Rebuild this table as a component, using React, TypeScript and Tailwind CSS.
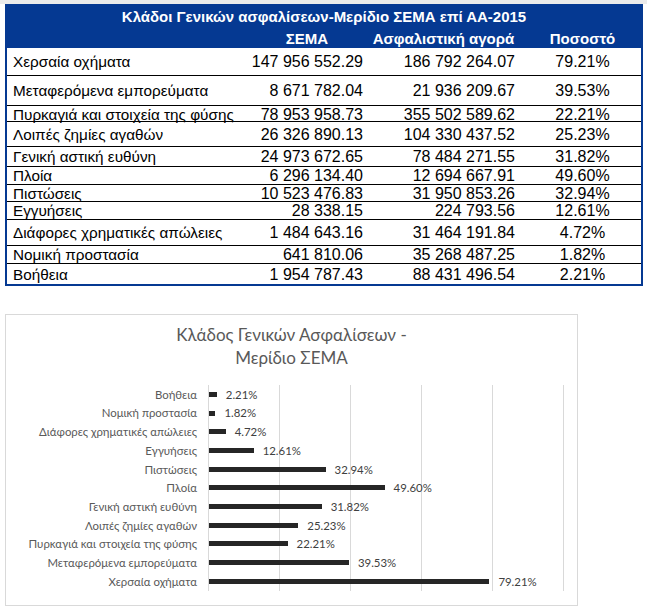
import React from "react";

type Row = { name: string; sema: string; market: string; pct: string; h: string };

const rows: Row[] = [
  { name: "Χερσαία οχήματα", sema: "147 956 552.29", market: "186 792 264.07", pct: "79.21%", h: "h-[28px]" },
  { name: "Μεταφερόμενα εμπορεύματα", sema: "8 671 782.04", market: "21 936 209.67", pct: "39.53%", h: "h-[30px]" },
  { name: "Πυρκαγιά και στοιχεία της φύσης", sema: "78 953 958.73", market: "355 502 589.62", pct: "22.21%", h: "h-[16px]" },
  { name: "Λοιπές ζημίες αγαθών", sema: "26 326 890.13", market: "104 330 437.52", pct: "25.23%", h: "h-[25px]" },
  { name: "Γενική αστική ευθύνη", sema: "24 973 672.65", market: "78 484 271.55", pct: "31.82%", h: "h-[20px]" },
  { name: "Πλοία", sema: "6 296 134.40", market: "12 694 667.91", pct: "49.60%", h: "h-[18px]" },
  { name: "Πιστώσεις", sema: "10 523 476.83", market: "31 950 853.26", pct: "32.94%", h: "h-[17px]" },
  { name: "Εγγυήσεις", sema: "28 338.15", market: "224 793.56", pct: "12.61%", h: "h-[18px]" },
  { name: "Διάφορες χρηματικές απώλειες", sema: "1 484 643.16", market: "31 464 191.84", pct: "4.72%", h: "h-[26px]" },
  { name: "Νομική προστασία", sema: "641 810.06", market: "35 268 487.25", pct: "1.82%", h: "h-[18px]" },
  { name: "Βοήθεια", sema: "1 954 787.43", market: "88 431 496.54", pct: "2.21%", h: "h-[20px]" },
];

const chartRows = [...rows].reverse();

const gridClasses = [
  "left-0",
  "left-[71px]",
  "left-[142px]",
  "left-[213px]",
  "left-[284px]",
  "left-[355px]",
];

export default function App() {
  return (
    <div className="w-[647px] h-[615px] bg-white overflow-hidden" style={{ fontFamily: "'Liberation Sans', Arial, sans-serif" }}>
      <div className="h-[4px] bg-[#ebebeb]" />
      {/* Table */}
      <div className="ml-[5px] w-[638px] border-x-2 border-b-2 border-[#053992] text-black">
        <div className="bg-[#053992] text-white font-bold text-[15px] leading-none">
          <div className="h-[24px] flex items-center justify-center">
            Κλάδοι Γενικών ασφαλίσεων-Μερίδιο ΣΕΜΑ επί ΑΑ-2015
          </div>
          <div className="h-[20px] grid grid-cols-[238px_124px_155px_117px] items-center">
            <div />
            <div className="text-center">ΣΕΜΑ</div>
            <div className="text-center pr-[6px]">Ασφαλιστική αγορά</div>
            <div className="text-center">Ποσοστό</div>
          </div>
        </div>
        {rows.map((r, i) => (
          <div
            key={r.name}
            className={`${r.h} grid grid-cols-[238px_124px_155px_117px] items-center text-[16px] leading-none pt-px ${
              i < rows.length - 1 ? "border-b border-black" : ""
            }`}
          >
            <div className="pl-[6px] whitespace-nowrap text-[15.3px]">{r.name}</div>
            <div className="text-right pr-[6px] whitespace-nowrap">{r.sema}</div>
            <div className="text-right pr-[9px] whitespace-nowrap">{r.market}</div>
            <div className="text-center whitespace-nowrap">{r.pct}</div>
          </div>
        ))}
      </div>

      {/* Chart */}
      <div
        className="mt-[28px] ml-[5px] w-[573px] h-[292px] border border-[#d9d9d9] bg-white"
        style={{ fontFamily: "Lato, 'Open Sans', sans-serif" }}
      >
        <div className="pt-[8px] text-center text-[17px] leading-[23px] text-[#595959]">
          <div>Κλάδος Γενικών Ασφαλίσεων -</div>
          <div>Μερίδιο ΣΕΜΑ</div>
        </div>
        <div className="mt-[16px] flex">
          <div className="w-[191px] flex flex-col">
            {chartRows.map((r) => (
              <div
                key={r.name}
                className="h-[18.7px] flex items-center justify-end text-[11.4px] text-[#595959] whitespace-nowrap"
              >
                {r.name}
              </div>
            ))}
          </div>
          <div className="ml-[11px] w-[356px] relative">
            {gridClasses.map((c) => (
              <div key={c} className={`absolute top-0 bottom-0 w-px bg-[#d9d9d9] ${c}`} />
            ))}
            <div className="relative flex flex-col">
              {chartRows.map((r) => {
                const v = parseFloat(r.pct);
                return (
                  <div key={r.name} className="h-[18.7px] flex items-center pl-px">
                    <div className="h-[5px] bg-[#262626]" style={{ width: `${(v / 100) * 354}px` }} />
                    <span className="ml-[9px] text-[11.4px] text-[#404040] whitespace-nowrap">{r.pct}</span>
                  </div>
                );
              })}
            </div>
          </div>
        </div>
      </div>
    </div>
  );
}
